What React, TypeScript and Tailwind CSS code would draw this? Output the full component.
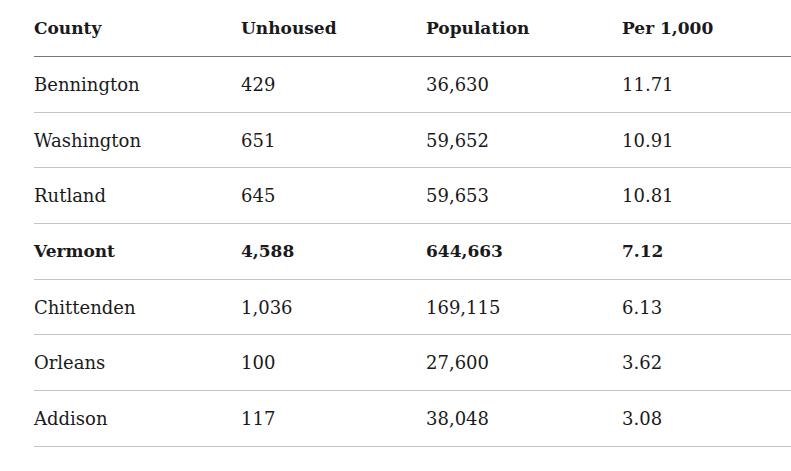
import React from "react";

const rows: { county: string; unhoused: string; population: string; per: string; bold?: boolean }[] = [
  { county: "Bennington", unhoused: "429", population: "36,630", per: "11.71" },
  { county: "Washington", unhoused: "651", population: "59,652", per: "10.91" },
  { county: "Rutland", unhoused: "645", population: "59,653", per: "10.81" },
  { county: "Vermont", unhoused: "4,588", population: "644,663", per: "7.12", bold: true },
  { county: "Chittenden", unhoused: "1,036", population: "169,115", per: "6.13" },
  { county: "Orleans", unhoused: "100", population: "27,600", per: "3.62" },
  { county: "Addison", unhoused: "117", population: "38,048", per: "3.08" },
];

export default function App() {
  return (
    <div
      className="w-[791px] h-[471px] bg-white pl-[34px] text-[#1a1a1a] text-[18px] overflow-hidden"
      style={{ fontFamily: '"DejaVu Serif", "Liberation Serif", serif' }}
    >
      <div className="grid grid-cols-[207px_185px_196px_1fr] h-[57px] items-center border-b border-[#777777] font-bold text-[17px] pt-[1px]">
        <div>County</div>
        <div>Unhoused</div>
        <div>Population</div>
        <div>Per 1,000</div>
      </div>
      {rows.map((r) => (
        <div
          key={r.county}
          className={`grid grid-cols-[207px_185px_196px_1fr] h-[55.7px] items-center border-b border-[#c4c4c4] ${r.bold ? "font-bold text-[17px]" : "font-normal"}`}
        >
          <div>{r.county}</div>
          <div>{r.unhoused}</div>
          <div>{r.population}</div>
          <div>{r.per}</div>
        </div>
      ))}
    </div>
  );
}
